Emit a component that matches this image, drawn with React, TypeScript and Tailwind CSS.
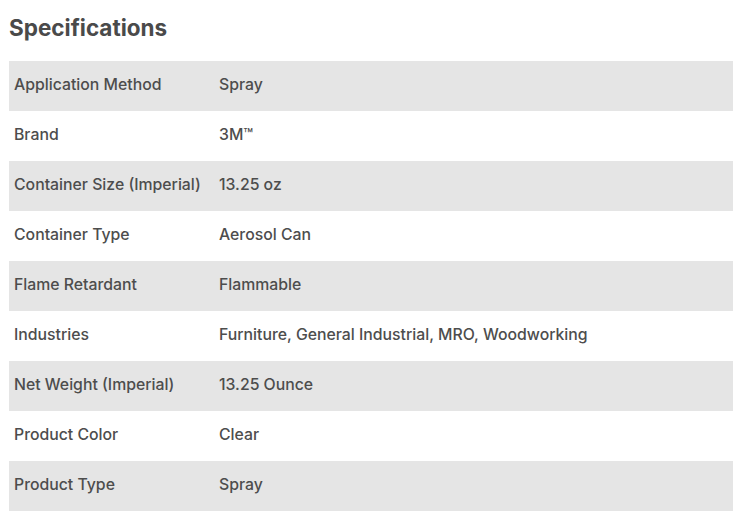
import React from "react";

const rows: [string, string][] = [
  ["Application Method", "Spray"],
  ["Brand", "3M™"],
  ["Container Size (Imperial)", "13.25 oz"],
  ["Container Type", "Aerosol Can"],
  ["Flame Retardant", "Flammable"],
  ["Industries", "Furniture, General Industrial, MRO, Woodworking"],
  ["Net Weight (Imperial)", "13.25 Ounce"],
  ["Product Color", "Clear"],
  ["Product Type", "Spray"],
];

export default function App() {
  return (
    <div className="w-[749px] h-[528px] bg-white pl-[9px] pt-[13px]" style={{ fontFamily: "Inter, 'Open Sans', sans-serif" }}>
      <h2 className="text-[22.5px] leading-[30px] font-bold text-[#4a4a4a]">Specifications</h2>
      <div className="mt-[18px] w-[724px] flex flex-col">
        {rows.map(([k, v], i) => (
          <div
            key={k}
            className={`flex h-[50px] items-center pb-[2px] text-[15.8px] font-medium text-[#4d4d4d] ${i % 2 === 0 ? "bg-[#e5e5e5]" : "bg-white"}`}
          >
            <div className="w-[210px] pl-[5px]">{k}</div>
            <div>{v}</div>
          </div>
        ))}
      </div>
    </div>
  );
}
